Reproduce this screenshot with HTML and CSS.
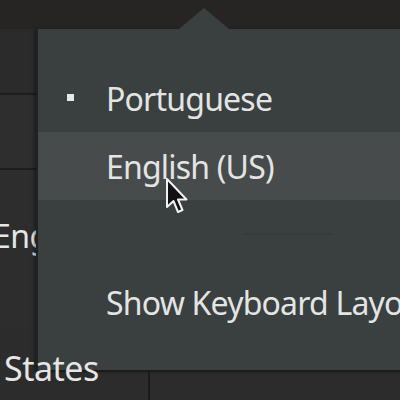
FILE: index.html
```html
<!DOCTYPE html>
<html>
<head>
<meta charset="utf-8">
<link rel="stylesheet" href="styles.css">
</head>
<body>
<div class="desktop">
  <div class="topbar"></div>
  <div class="side">
    <div class="row r1"></div>
    <div class="row r2"></div>
    <div class="row r3"><span class="side-text eng">English (US)</span></div>
  </div>
  <div class="bottom">
    <div class="cell c1"><span class="side-text states">States</span></div>
    <div class="cell c2"></div>
  </div>

  <div class="popup">
    <div class="arrow"></div>
    <div class="menu">
      <div class="item"><span class="bullet"></span><span class="label">Portuguese</span></div>
      <div class="item hover"><span class="label">English (US)</span></div>
      <div class="sep"><span class="sep-line"></span></div>
      <div class="item"><span class="label">Show Keyboard Layout</span></div>
    </div>
  </div>

  <svg class="cursor" width="24" height="38" viewBox="0 0 24 38">
    <path d="M2 2 L2 30 L8.5 24 L13 35 L17.5 33 L13 22.5 L21.5 22.5 Z" fill="#111" stroke="#f2f2f2" stroke-width="2" stroke-linejoin="round"/>
  </svg>
</div>
</body>
</html>
```

FILE: styles.css
```css
html, body {
  margin: 0;
  padding: 0;
  background: #2d2c2c;
}
.desktop {
  position: relative;
  width: 400px;
  height: 400px;
  overflow: hidden;
  font-family: "Noto Sans", "Open Sans", sans-serif;
  display: flex;
  flex-direction: column;
}
.topbar {
  height: 29px;
  background: #272424;
  flex: none;
}
.side {
  display: flex;
  flex-direction: column;
  flex: none;
}
.row {
  border-bottom: 2px solid #1e1d1d;
}
.r1 { height: 64px; background: #2c2b2b; }
.r2 { height: 73px; background: #2f2e2e; }
.r3 {
  height: 160px;
  background: #2e2d2d;
  border-bottom: none;
  padding-top: 44px;
  box-sizing: border-box;
}
.side-text {
  color: #e6e6e6;
  font-size: 32px;
  display: block;
  white-space: nowrap;
  letter-spacing: -0.5px;
}
.eng { margin-left: -7px; }
.bottom {
  flex: 1;
  display: flex;
  background: #2d2c2c;
}
.cell { height: 100%; }
.c1 {
  width: 148px;
  border-right: 2px solid #1c1b1b;
  padding-top: 15px;
}
.states {
  position: relative;
  z-index: 3;
  padding-left: 4px;
  font-size: 34px;
}
.c2 { flex: 1; }

.popup {
  position: absolute;
  left: 36px;
  top: 29px;
  width: 420px;
  height: 341px;
  background: #3a3f3f;
  border-left: 2px solid #222121;
  border-bottom: 2px solid #1c1b1b;
  box-shadow: -2px 0 3px rgba(0,0,0,0.35);
  z-index: 2;
}
.arrow {
  position: absolute;
  left: 141px;
  top: -21px;
  width: 0;
  height: 0;
  border-left: 25px solid transparent;
  border-right: 25px solid transparent;
  border-bottom: 21px solid #3a3f3f;
}
.menu {
  display: flex;
  flex-direction: column;
  padding-top: 35px;
}
.item {
  height: 68px;
  display: flex;
  align-items: center;
  padding-left: 68px;
  position: relative;
  color: #e3e5e5;
  font-size: 32px;
  letter-spacing: -0.8px;
  white-space: nowrap;
}
.item.hover { background: #474b4b; }
.label { display: block; }
.bullet {
  position: absolute;
  left: 29px;
  top: 30px;
  width: 7px;
  height: 7px;
  background: #e8e8e8;
}
.sep {
  height: 68px;
  display: flex;
  align-items: center;
  padding-left: 204px;
}
.sep-line {
  width: 90px;
  height: 2px;
  background: #363a3a;
}
.cursor {
  position: absolute;
  left: 165px;
  top: 177px;
  z-index: 4;
}
```
